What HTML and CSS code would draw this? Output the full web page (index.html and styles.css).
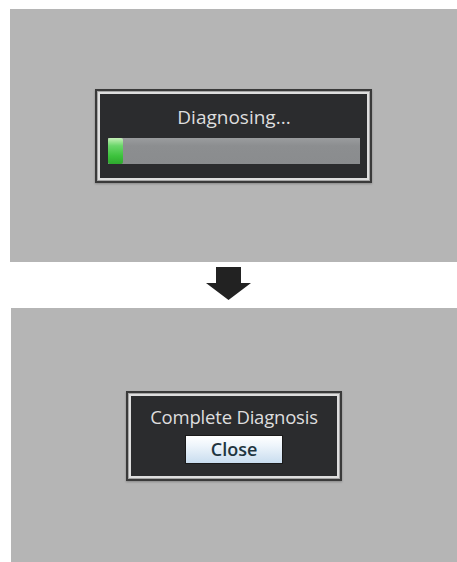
FILE: index.html
```html
<!DOCTYPE html>
<html>
<head>
<meta charset="utf-8">
<link rel="stylesheet" href="styles.css">
</head>
<body>
<div class="page">
  <section class="panel panel-top">
    <div class="dialog dialog-progress">
      <div class="title">Diagnosing...</div>
      <div class="bar"><div class="bar-fill" style="width:15px"></div></div>
    </div>
  </section>
  <div class="arrow-row">
    <svg class="arrow" width="46" height="34" viewBox="0 0 46 34">
      <path d="M10 0 H35 V16 H45 L22.5 33 L0 16 H10 Z" fill="#222"/>
    </svg>
  </div>
  <section class="panel panel-bottom">
    <div class="dialog dialog-done">
      <div class="title title-done">Complete Diagnosis</div>
      <button class="btn">Close</button>
    </div>
  </section>
</div>
</body>
</html>
```
FILE: styles.css
```css
html, body {
  margin: 0;
  padding: 0;
  background: #ffffff;
}
.page {
  width: 457px;
  height: 562px;
  display: flex;
  flex-direction: column;
  font-family: "Open Sans", "DejaVu Sans", sans-serif;
}
.panel {
  background: #b5b5b5;
  display: flex;
  align-items: center;
  justify-content: center;
}
.panel-top {
  margin: 9px 0 0 10px;
  height: 253px;
}
.panel-bottom {
  margin-left: 11px;
  height: 254px;
  padding-top: 2px;
  box-sizing: border-box;
}
.arrow-row {
  height: 46px;
  display: flex;
  justify-content: center;
  align-items: flex-start;
  padding-left: 1px;
  box-sizing: border-box;
}
.arrow {
  display: block;
  margin-top: 5px;
}
.dialog {
  box-sizing: border-box;
  background: #2b2c2e;
  border: 2px solid #3a3a3a;
  box-shadow: inset 0 0 0 1px #a4a4a4, inset 0 0 0 3px #dedede, 0 1px 2px rgba(0,0,0,0.25);
  display: flex;
  flex-direction: column;
  align-items: center;
}
.dialog-progress {
  width: 277px;
  height: 94px;
  padding: 15px 10px 0 11px;
  align-items: stretch;
}
.title {
  color: #dedede;
  font-size: 19px;
  font-weight: 500;
  line-height: 22px;
  text-align: center;
}
.bar {
  margin-top: 10px;
  height: 26px;
  background: linear-gradient(#9a9c9e, #8c8e90 30%, #8a8c8e);
  display: flex;
}
.bar-fill {
  height: 100%;
  background: linear-gradient(#c6f0b8 0%, #6ad66a 30%, #3cc23c 70%, #2ea82e 100%);
  border-radius: 2px;
}
.dialog-done {
  width: 216px;
  height: 90px;
  padding-top: 13px;
}
.title-done {
  font-size: 18.5px;
  letter-spacing: -0.2px;
}
.btn {
  margin-top: 7px;
  width: 98px;
  height: 29px;
  box-sizing: border-box;
  border: 1px solid #1a1a1a;
  background: linear-gradient(#ffffff 0%, #eef5fb 35%, #c9ddef 100%);
  font-family: "Open Sans", "DejaVu Sans", sans-serif;
  font-size: 18px;
  font-weight: 600;
  color: #1f3540;
  line-height: 25px;
  padding: 0;
}
```
